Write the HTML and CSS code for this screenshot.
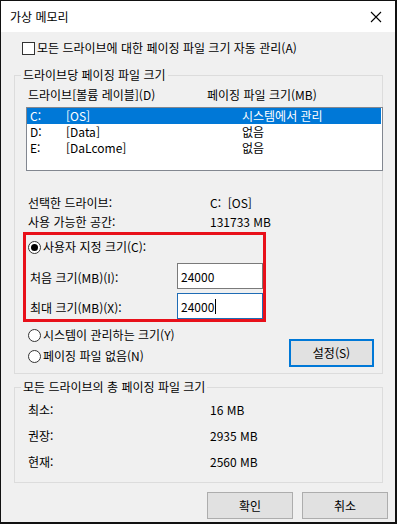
FILE: index.html
```html
<!DOCTYPE html>
<html lang="ko">
<head>
<meta charset="utf-8">
<link rel="stylesheet" href="styles.css">
</head>
<body>
<div class="window">
  <div class="titlebar">
    <span class="title">가상 메모리</span>
    <svg class="close" width="12" height="12" viewBox="0 0 12 12"><path d="M1 1L11 11M11 1L1 11" stroke="#000" stroke-width="1.1" fill="none"/></svg>
  </div>
  <div class="content">
    <div class="check-row"><span class="checkbox"></span><span>모든 드라이브에 대한 페이징 파일 크기 자동 관리(A)</span></div>

    <fieldset class="group group1">
      <legend>드라이브당 페이징 파일 크기</legend>
      <div class="list-head"><span class="col-drive">드라이브[볼륨 레이블](D)</span><span>페이징 파일 크기(MB)</span></div>
      <div class="listbox">
        <div class="lrow selected"><span class="c1">C:</span><span class="c2">[OS]</span><span>시스템에서 관리</span></div>
        <div class="lrow"><span class="c1">D:</span><span class="c2">[Data]</span><span>없음</span></div>
        <div class="lrow"><span class="c1">E:</span><span class="c2">[DaLcome]</span><span>없음</span></div>
      </div>
      <div class="info first"><span class="lbl">선택한 드라이브:</span><span>C:&nbsp;&nbsp;[OS]</span></div>
      <div class="info"><span class="lbl">사용 가능한 공간:</span><span>131733 MB</span></div>
      <div class="redbox">
        <div class="radio-row"><span class="radio on"></span><span>사용자 지정 크기(C):</span></div>
        <div class="size-row first"><span class="slbl">처음 크기(MB)(I):</span><span class="input">24000</span></div>
        <div class="size-row"><span class="slbl">최대 크기(MB)(X):</span><span class="input focus">24000<span class="caret"></span></span></div>
      </div>
      <div class="options">
        <div class="radios">
          <div class="radio-row"><span class="radio"></span><span>시스템이 관리하는 크기(Y)</span></div>
          <div class="radio-row second"><span class="radio"></span><span>페이징 파일 없음(N)</span></div>
        </div>
        <button class="btn set">설정(S)</button>
      </div>
    </fieldset>

    <fieldset class="group group2">
      <legend>모든 드라이브의 총 페이징 파일 크기</legend>
      <div class="trow first"><span class="lbl">최소:</span><span>16 MB</span></div>
      <div class="trow"><span class="lbl">권장:</span><span>2935 MB</span></div>
      <div class="trow"><span class="lbl">현재:</span><span>2560 MB</span></div>
    </fieldset>

    <div class="buttons">
      <button class="btn">확인</button>
      <button class="btn">취소</button>
    </div>
  </div>
</div>
</body>
</html>
```

FILE: styles.css
```css
* { box-sizing: border-box; }
html, body { margin: 0; padding: 0; background: #fff; }
body {
  font-family: "Noto Sans CJK KR", "Noto Sans", "Liberation Sans", sans-serif;
  font-size: 12px;
  color: #000;
}
.window {
  width: 397px;
  height: 524px;
  border-style: solid;
  border-color: #111;
  border-width: 1px 2px 2px 1px;
  background: #f0f0f0;
  overflow: hidden;
}
.titlebar {
  height: 31px;
  background: #fff;
  display: flex;
  align-items: center;
  justify-content: space-between;
  padding: 0 8px 0 9px;
}
.title { line-height: 16px; }
.close { display: block; margin-right: 5px; }
.content { padding: 0; }
.check-row {
  display: flex;
  align-items: center;
  height: 16px;
  margin-top: 8px;
  padding-left: 21px;
  line-height: 16px;
}
.checkbox {
  width: 13px; height: 13px;
  border: 1px solid #333;
  background: #fff;
  margin-right: 2px;
  flex: none;
}
.group {
  margin: 0 0 0 13px;
  padding: 0;
  width: 369px;
  border: 1px solid #dcdcdc;
  min-width: 0;
}
.group legend {
  margin-left: 6px;
  padding: 0 2px;
  line-height: 16px;
}
.group1 { margin-top: 11px; padding-bottom: 6px; }
.list-head {
  display: flex;
  line-height: 16px;
  margin-top: 4px;
  padding-left: 13px;
}
.col-drive { width: 179px; flex: none; }
.listbox {
  margin: 4px 0 0 11px;
  width: 357px;
  height: 64px;
  border: 1px solid #828790;
  background: #fff;
}
.lrow {
  display: flex;
  height: 16px;
  line-height: 16px;
  padding-left: 3px;
  margin-right: 1px;
}
.lrow .c1 { width: 36px; flex: none; }
.lrow .c2 { width: 176px; flex: none; }
.lrow.selected { background: #0078d7; color: #fff; }
.info {
  display: flex;
  line-height: 16px;
  padding-left: 13px;
  margin-top: 3px;
}
.info.first { margin-top: 24px; }
.info .lbl { width: 182px; flex: none; }
.redbox {
  margin: 2px 0 0 8px;
  width: 243px;
  height: 90px;
  border: 3px solid #e8101a;
  padding: 4px 0 0 2px;
}
.radio-row {
  display: flex;
  align-items: center;
  line-height: 16px;
  height: 16px;
}
.radio {
  width: 13px; height: 13px;
  border: 1px solid #333;
  border-radius: 50%;
  background: #fff;
  margin-right: 2px;
  flex: none;
  display: flex;
  align-items: center;
  justify-content: center;
}
.radio.on::after {
  content: "";
  width: 7px; height: 7px;
  border-radius: 50%;
  background: #000;
}
.size-row {
  display: flex;
  align-items: center;
  height: 26px;
  margin-top: 4px;
  padding-left: 2px;
}
.size-row.first { margin-top: 8px; }
.slbl { width: 147px; flex: none; padding-top: 2px; }
.input {
  width: 88px;
  height: 26px;
  border: 1px solid #7a7a7a;
  background: #fff;
  padding-left: 3px;
  line-height: 23px;
  display: flex;
  align-items: center;
}
.input.focus { border-color: #1f6cb5; }
.caret { width: 1px; height: 15px; background: #000; margin-left: 1px; }
.options {
  display: flex;
  justify-content: space-between;
  padding-left: 13px;
  margin-top: 5px;
}
.radios .second { margin-top: 5px; }
.btn {
  font: inherit;
  color: #000;
  background: #e1e1e1;
  border: 1px solid #adadad;
  width: 86px;
  height: 27px;
  padding: 0;
  line-height: 16px;
}
.btn.set {
  width: 85px;
  height: 28px;
  margin: 12px 8px 0 0;
  border: 2px solid #0078d7;
}
.group2 { margin-top: 5px; padding-bottom: 12px; }
.trow {
  display: flex;
  line-height: 16px;
  padding-left: 13px;
  margin-top: 10px;
}
.trow.first { margin-top: 7px; }
.trow .lbl { width: 182px; flex: none; }
.buttons {
  display: flex;
  justify-content: flex-end;
  gap: 9px;
  margin-top: 9px;
  padding-right: 7px;
}
```
